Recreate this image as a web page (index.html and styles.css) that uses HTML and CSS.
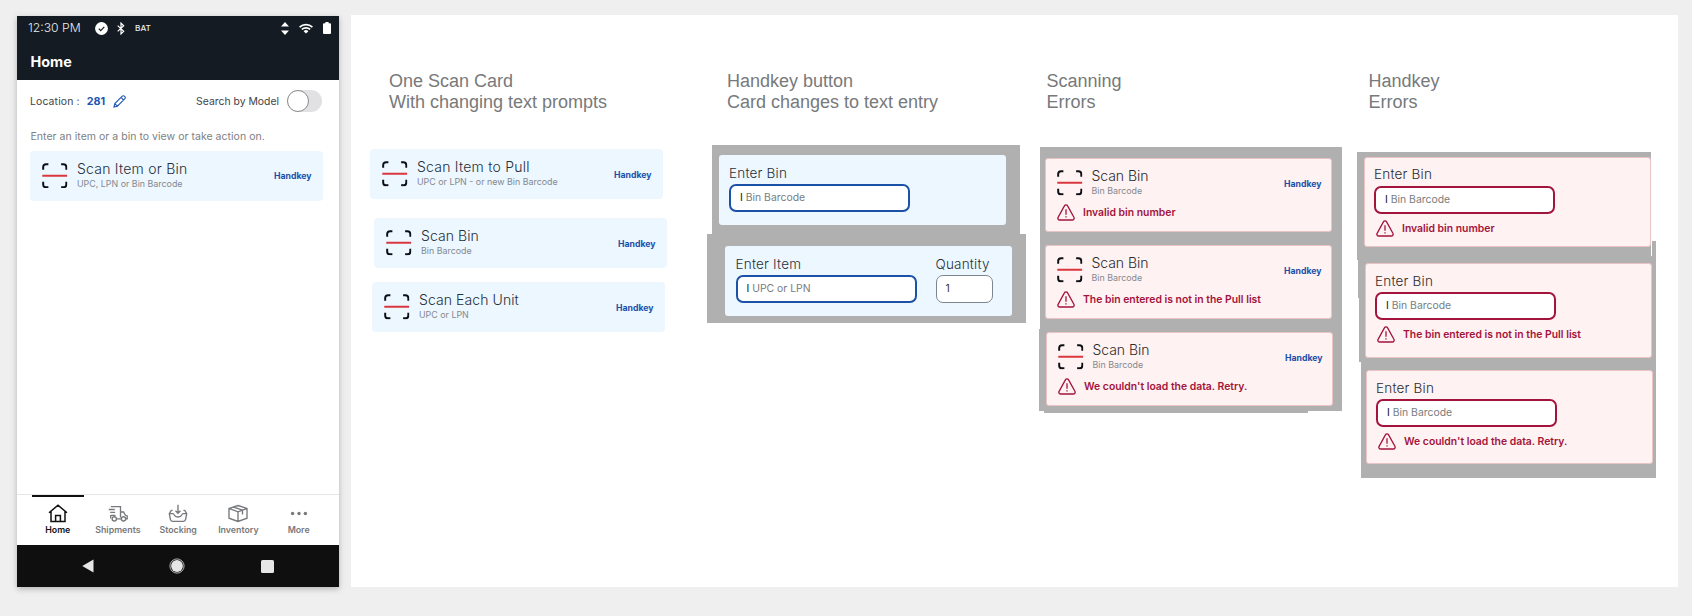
FILE: index.html
```html
<!DOCTYPE html>
<html lang="en">

<head>
    <meta charset="UTF-8">
    <meta name="viewport" content="width=device-width, initial-scale=1.0">
    <title>Scan Card</title>
    <link rel="stylesheet" href="styles.css">
</head>

<body>
    <!-- shared icons -->
    <svg class="sprite" width="0" height="0">
        <symbol id="scan" viewBox="0 0 26 26">
            <path d="M1.2 7V4.2a3 3 0 0 1 3-3H6.5M19.5 1.2h2.3a3 3 0 0 1 3 3V7M24.8 19v2.8a3 3 0 0 1-3 3h-2.3M6.5 24.8H4.2a3 3 0 0 1-3-3V19" fill="none" stroke="#0b0f14" stroke-width="2"/>
            <path d="M.3 13h25.4" stroke="#d9363e" stroke-width="1.9"/>
        </symbol>
        <symbol id="warning" viewBox="0 0 18 17">
            <path d="M7.4 1.9a1.8 1.8 0 0 1 3.2 0l6.3 11.4a1.8 1.8 0 0 1-1.6 2.7H2.7a1.8 1.8 0 0 1-1.6-2.7z" fill="none" stroke="#a3143c" stroke-width="1.3"/>
            <path d="M9 5.3v5.4M9 12.2v1.3" stroke="#a3143c" stroke-width="1.3"/>
        </symbol>
    </svg>

    <div class="page">
        <div class="phone">
            <div class="status-bar">
                <span class="time">12:30 PM</span>
                <svg class="check" width="13" height="13" viewBox="0 0 13 13"><circle cx="6.5" cy="6.5" r="6.4" fill="#fff"/><path d="M3.8 6.7l1.9 1.9 3.6-3.7" fill="none" stroke="#141b22" stroke-width="1.2"/></svg>
                <svg class="bluetooth" width="8" height="13" viewBox="0 0 8 13"><path d="M.7 3.6l6 5.6L4 11.9V1.1l2.7 2.7-6 5.6" fill="none" stroke="#fff" stroke-width="1.2"/></svg>
                <span class="bat">BAT</span>
                <svg class="updown" width="8" height="13" viewBox="0 0 8 13"><path d="M4 0l4 4.6H0zM4 13l4-4.6H0z" fill="#fff"/></svg>
                <svg class="wifi" width="14" height="11" viewBox="0 0 14 11"><path d="M.6 4.1a9.3 9.3 0 0 1 12.8 0M2.9 6.4a6 6 0 0 1 8.2 0" fill="none" stroke="#fff" stroke-width="1.7"/><path d="M7 10.6L4.6 8.2a3.5 3.5 0 0 1 4.8 0z" fill="#fff"/></svg>
                <svg class="battery" width="8" height="12" viewBox="0 0 8 12"><path d="M2.4 0h3.2v1.2H7a1 1 0 0 1 1 1V11a1 1 0 0 1-1 1H1a1 1 0 0 1-1-1V2.200a1 1 0 0 1 1-1h1.400z" fill="#fff"/></svg>
            </div>
            <div class="title-bar">Home</div>
            <div class="content">
                <div class="location-row">
                    <span>Location :</span>
                    <b>281</b>
                    <svg width="13" height="13" viewBox="0 0 13 13" fill="none" stroke="#1f55b5" stroke-width="1.1"><path d="M.9 12.1l.9-3.500L9.300 1.100a1.400 1.400 0 0 1 2 0l.6.6a1.400 1.400 0 0 1 0 2L4.400 11.200zM8 2.400L10.600 5M1.800 8.600l2.600 2.600"/></svg>
                    <span class="model">Search by Model</span>
                    <span class="toggle"><i></i></span>
                </div>
                <p class="hint">Enter an item or a bin to view or take action on.</p>
                <div class="scan-card">
                    <svg class="scan-icon"><use href="#scan"/></svg>
                    <div class="scan-text"><h3 class="wide">Scan Item or Bin</h3><p>UPC, LPN or Bin Barcode</p></div>
                    <a class="handkey">Handkey</a>
                </div>
            </div>
            <div class="tabs">
                <div class="tab active">
                    <svg width="20" height="19" viewBox="0 0 20 19"><path d="M1 8.800L10 1.200l9 7.600M3 7.300v10.200h14V7.300M7.600 17.500v-6h4.800v6"/></svg>
                    Home
                </div>
                <div class="tab">
                    <svg width="20" height="19" viewBox="0 0 20 19"><path d="M2.800 2.600h9.700v11M3.300 13.800h-.6V11M.8 5.500h6M2.200 8.300h5M9 14.800h4.200M12.500 8h3.100l1.600 3 2 .9v2.900h-1.500M3 11.300h4.500"/><circle cx="6.300" cy="14.900" r="2.100"/><circle cx="15.500" cy="14.900" r="2.100"/></svg>
                    Shipments
                </div>
                <div class="tab">
                    <svg width="20" height="19" viewBox="0 0 20 19"><path d="M10 .8v8.400M7.500 6.800L10 9.300l2.500-2.500M4.600 6.300H3.200L1.300 9.600l1.100 5.800a2.300 2.300 0 0 0 2.200 1.900h10.800a2.300 2.300 0 0 0 2.200-1.900l1.100-5.800-1.900-3.300h-1.400M1.300 9.600h3.500c.9 0 1.200.6 1.500 1.400 1.100 2.700 6.300 2.700 7.400 0 .3-.8.600-1.400 1.500-1.400h3.500"/></svg>
                    Stocking
                </div>
                <div class="tab">
                    <svg width="20" height="19" viewBox="0 0 20 19"><path d="M10 1.500l9 2.900v9.800l-9 3.300-9-3.300V4.400zM1 4.400l9 3.500 9-3.500M10 7.900v9.600M5.500 3l9 3.200v4.300"/></svg>
                    Inventory
                </div>
                <div class="tab">
                    <svg class="dots" width="20" height="19" viewBox="0 0 20 19"><circle cx="3.600" cy="9.500" r="1.700"/><circle cx="10" cy="9.500" r="1.700"/><circle cx="16.400" cy="9.500" r="1.700"/></svg>
                    More
                </div>
            </div>
            <div class="android-bar">
                <svg width="12" height="14" viewBox="0 0 12 14"><path d="M11.500.5v13L.3 7z" fill="#e6e6e6"/></svg>
                <svg width="16" height="16" viewBox="0 0 16 16"><circle cx="8" cy="8" r="7.100" fill="none" stroke="#e0e0e0" stroke-width=".8"/><circle cx="8" cy="8" r="5.900" fill="#e6e6e6"/></svg>
                <svg width="13" height="13" viewBox="0 0 13 13"><rect width="13" height="13" rx="1.500" fill="#e6e6e6"/></svg>
            </div>
        </div>

        <div class="canvas">
            <div class="column scan-column">
                <h2>One Scan Card<br>With changing text prompts</h2>
                <div class="scan-card pull">
                    <svg class="scan-icon"><use href="#scan"/></svg>
                    <div class="scan-text"><h3 class="wide">Scan Item to Pull</h3><p>UPC or LPN - or new Bin Barcode</p></div>
                    <a class="handkey">Handkey</a>
                </div>
                <div class="scan-card bin">
                    <svg class="scan-icon"><use href="#scan"/></svg>
                    <div class="scan-text"><h3>Scan Bin</h3><p>Bin Barcode</p></div>
                    <a class="handkey">Handkey</a>
                </div>
                <div class="scan-card unit">
                    <svg class="scan-icon"><use href="#scan"/></svg>
                    <div class="scan-text"><h3>Scan Each Unit</h3><p>UPC or LPN</p></div>
                    <a class="handkey">Handkey</a>
                </div>
            </div>

            <div class="column entry-column">
                <h2>Handkey button<br>Card changes to text entry</h2>
                <div class="backdrop bin-backdrop">
                    <div class="entry-card">
                        <div class="field">
                            <label>Enter Bin</label>
                            <div class="input"><i>I</i> Bin Barcode</div>
                        </div>
                    </div>
                </div>
                <div class="backdrop item-backdrop">
                    <div class="entry-card">
                        <div class="field">
                            <label>Enter Item</label>
                            <div class="input"><i>I</i> UPC or LPN</div>
                        </div>
                        <div class="field">
                            <label>Quantity</label>
                            <div class="input quantity">1</div>
                        </div>
                    </div>
                </div>
            </div>

            <div class="column scan-errors">
                <h2>Scanning<br>Errors</h2>
                <div class="backdrop">
                    <div class="error-card">
                        <div class="scan-row">
                            <svg class="scan-icon"><use href="#scan"/></svg>
                            <div class="scan-text"><h3>Scan Bin</h3><p>Bin Barcode</p></div>
                            <a class="handkey">Handkey</a>
                        </div>
                        <div class="alert"><svg><use href="#warning"/></svg>Invalid bin number</div>
                    </div>
                    <div class="error-card">
                        <div class="scan-row">
                            <svg class="scan-icon"><use href="#scan"/></svg>
                            <div class="scan-text"><h3>Scan Bin</h3><p>Bin Barcode</p></div>
                            <a class="handkey">Handkey</a>
                        </div>
                        <div class="alert"><svg><use href="#warning"/></svg>The bin entered is not in the Pull list</div>
                    </div>
                    <div class="error-card last">
                        <div class="scan-row">
                            <svg class="scan-icon"><use href="#scan"/></svg>
                            <div class="scan-text"><h3>Scan Bin</h3><p>Bin Barcode</p></div>
                            <a class="handkey">Handkey</a>
                        </div>
                        <div class="alert"><svg><use href="#warning"/></svg>We couldn't load the data. Retry.</div>
                    </div>
                </div>
            </div>

            <div class="column entry-errors">
                <h2>Handkey<br>Errors</h2>
                <div class="backdrop">
                    <div class="error-card first">
                        <div class="field">
                            <label>Enter Bin</label>
                            <div class="input"><i>I</i> Bin Barcode</div>
                        </div>
                        <div class="alert"><svg><use href="#warning"/></svg>Invalid bin number</div>
                    </div>
                    <div class="error-card second">
                        <div class="field">
                            <label>Enter Bin</label>
                            <div class="input"><i>I</i> Bin Barcode</div>
                        </div>
                        <div class="alert"><svg><use href="#warning"/></svg>The bin entered is not in the Pull list</div>
                    </div>
                    <div class="error-card third">
                        <div class="field">
                            <label>Enter Bin</label>
                            <div class="input"><i>I</i> Bin Barcode</div>
                        </div>
                        <div class="alert"><svg><use href="#warning"/></svg>We couldn't load the data. Retry.</div>
                    </div>
                </div>
            </div>
        </div>
    </div>
</body>

</html>
```
FILE: styles.css
```css
* {
    box-sizing: border-box;
}

body {
    margin: 0;
    height: 616px;
    overflow: hidden;
    background-color: #efefef;
    font-family: Inter, "Liberation Sans", sans-serif;
    color: #26303a;
}

h2, h3, p {
    margin: 0;
    font-weight: 400;
}

.sprite {
    display: block;
}

svg {
    flex: none;
}

.page {
    display: flex;
    align-items: flex-start;
    padding: 15px 14px 0 17px;
}

/* Phone */
.phone {
    display: flex;
    flex-direction: column;
    width: 321.5px;
    height: 571px;
    margin-top: 1px;
    background-color: #fff;
    box-shadow: 0 2px 6px rgba(0, 0, 0, 0.25);
}

.status-bar {
    display: flex;
    align-items: center;
    height: 24px;
    padding: 0 7.5px 0 11px;
    background-color: #141b22;
    color: #e9ebed;
}

.time {
    width: 67px;
    font-size: 12.2px;
    font-weight: 350;
    line-height: 22px;
    white-space: nowrap;
}

.bluetooth {
    margin-left: 9px;
}

.bat {
    margin-left: 10px;
    font-size: 8.2px;
    font-weight: 500;
}

.updown {
    margin-left: auto;
}

.wifi {
    margin: 0 10px 0 10.500px;
}

.title-bar {
    height: 39.5px;
    padding-left: 13.500px;
    background-color: #141b22;
    color: #fff;
    font-size: 14.4px;
    font-weight: 650;
    line-height: 43px;
}

.content {
    flex: 1;
    padding: 10px 16px 0 13px;
}

.location-row {
    display: flex;
    align-items: center;
    height: 23px;
    font-size: 10.4px;
    color: #3d4348;
}

.location-row span:first-child {
    letter-spacing: 0.15px;
}

.location-row b {
    margin: 0 8px 0 7px;
    font-size: 10.8px;
    color: #1f55b5;
}

.model {
    margin-left: auto;
}

.toggle {
    width: 35px;
    height: 22px;
    margin: 0 1px 0 7.500px;
    border-radius: 11px;
    background-color: #e1e1e3;
}

.toggle i {
    display: block;
    width: 22px;
    height: 22px;
    border: 1px solid #8b8b8d;
    border-radius: 50%;
    background-color: #fff;
}

.hint {
    padding-left: 0.5px;
    margin: 16px 0 6px;
    font-size: 10.5px;
    line-height: 16px;
    letter-spacing: 0.03px;
    color: #7d7f82;
}

.tabs {
    display: grid;
    grid-template-columns: repeat(5, 60.25px);
    height: 51px;
    padding-left: 10.500px;
    border-top: 1px solid #e4e7e9;
}

.tab {
    display: flex;
    flex-direction: column;
    align-items: center;
    padding-top: 9px;
    font-size: 8.8px;
    font-weight: 600;
    line-height: 14px;
    color: #77797c;
}

.tab svg {
    fill: none;
    stroke: #77797c;
    stroke-width: 1.35;
}

.tab .dots {
    fill: #77797c;
    stroke: none;
}

.tab.active {
    width: 52.5px;
    margin-left: 4px;
    padding-top: 7px;
    border-top: 2px solid #111;
    color: #111;
}

.tab.active svg {
    stroke: #111;
    stroke-width: 1.5;
}

.android-bar {
    display: flex;
    justify-content: space-between;
    align-items: center;
    height: 42px;
    padding: 0 64.5px 0 64.5px;
    background-color: #0f0f0f;
}

/* Canvas with the card variants */
.canvas {
    display: grid;
    grid-template-columns: 337px 332px 318px 321px;
    width: 1327px;
    height: 572px;
    margin-left: 12.500px;
    padding: 55px 0 0 19px;
    background-color: #fff;
}

h2 {
    height: 42px;
    padding-top: 1px;
    font-family: "Liberation Sans", Arial, sans-serif;
    font-size: 18px;
    line-height: 21px;
    color: #77797b;
}

.backdrop {
    background-color: #b0b0b0;
}

/* Scan card */
.scan-card {
    display: flex;
    align-items: center;
    width: 292.5px;
    height: 50px;
    padding: 0 11px 0 12px;
    border-radius: 4px;
    background-color: #edf7ff;
}

.scan-icon {
    width: 25.5px;
    height: 25.5px;
}

.scan-text {
    margin: -1.500px auto 0 9.500px;
}

.scan-text h3 {
    font-size: 14px;
    font-weight: 350;
    line-height: 18px;
    letter-spacing: 0.08px;
}

.scan-text h3.wide {
    letter-spacing: 0.23px;
}

.scan-text p {
    font-size: 8.9px;
    line-height: 12px;
    color: #84898f;
}

.handkey {
    margin-top: 1px;
    font-size: 8.7px;
    font-weight: 700;
    color: #1b4fa8;
}

.scan-column h2 {
    margin: 0 0 37px 19px;
}

.bin {
    margin: 19px 0 0 4px;
}

.unit {
    margin: 14px 0 0 2px;
}

/* Text entry card */
.entry-column h2 {
    margin: 0 0 33px 20px;
}

.entry-card {
    display: flex;
    gap: 19px;
    width: 287px;
    height: 70px;
    padding: 9px 10.500px 0;
    border-radius: 3px;
    background-color: #edf7ff;
}

.bin-backdrop {
    width: 308px;
    height: 89px;
    margin-left: 5px;
    padding: 9.500px 0 0 6.500px;
}

.item-backdrop {
    width: 319px;
    height: 89px;
    padding: 11.500px 0 0 18px;
}

.field label {
    display: block;
    font-size: 13.500px;
    font-weight: 350;
    line-height: 18px;
    letter-spacing: 0.2px;
}

.input {
    width: 181px;
    height: 28px;
    margin-top: 2.500px;
    padding-left: 9px;
    border: 2px solid #1b51a6;
    border-radius: 7px;
    background-color: #fff;
    font-size: 10.4px;
    line-height: 24px;
    color: #787c80;
}

.input i {
    font-style: normal;
    color: #111;
}

.quantity {
    width: 57px;
    border: 1px solid #7e868d;
    line-height: 26px;
    color: #333;
}

/* Error cards */
.error-card {
    width: 287px;
    height: 74px;
    border: 1px solid #ebc3c5;
    border-radius: 3px;
    background-color: #fff2f2;
    color: #2c2b2d;
}

.error-card .scan-text {
    margin: -3px auto 0 9px;
}

.error-card .scan-text h3 {
    letter-spacing: -0.05px;
}

.scan-row {
    display: flex;
    align-items: center;
    height: 48px;
    padding: 0 9.500px 0 11px;
}

.alert {
    display: flex;
    align-items: center;
    height: 17px;
    margin: -3px 0 0 10.500px;
    font-size: 10.4px;
    font-weight: 600;
    color: #a3143c;
}

.alert svg {
    width: 18px;
    height: 17px;
    margin-right: 8.500px;
}

.scan-errors h2 {
    margin: 0 0 35px 7.500px;
}

.scan-errors .backdrop {
    display: flex;
    flex-direction: column;
    gap: 13px;
    width: 303px;
    height: 266px;
    padding: 11px 0 0 6px;
    clip-path: polygon(1px 0, 303px 0, 303px 264px, 269px 264px, 269px 266px, 5px 266px, 5px 264px, 0 264px, 0 182px, 1px 182px);
}

.scan-errors .last {
    margin: 0 0 0 1px;
}

.entry-errors h2 {
    margin: 0 0 40px 11.500px;
}

.entry-errors .backdrop {
    width: 299px;
    height: 326px;
    padding: 4.500px 0 0 7px;
    clip-path: polygon(0 0, 294px 0, 294px 104px, 295px 104px, 295px 89px, 299px 89px, 299px 326px, 4px 326px, 4px 210px, 2px 210px, 2px 146px, 1px 146px, 1px 108px, 0 108px);
}

.entry-errors .field {
    padding: 7.500px 0 0 9px;
}

.entry-errors .input {
    border-color: #a3143c;
}

.entry-errors .alert {
    margin: 6px 0 0 10.500px;
}

.first {
    height: 90px;
}

.second {
    height: 94.5px;
    margin: 16.500px 0 0 1px;
}

.third {
    height: 93.5px;
    margin: 12.500px 0 0 2px;
}
```
